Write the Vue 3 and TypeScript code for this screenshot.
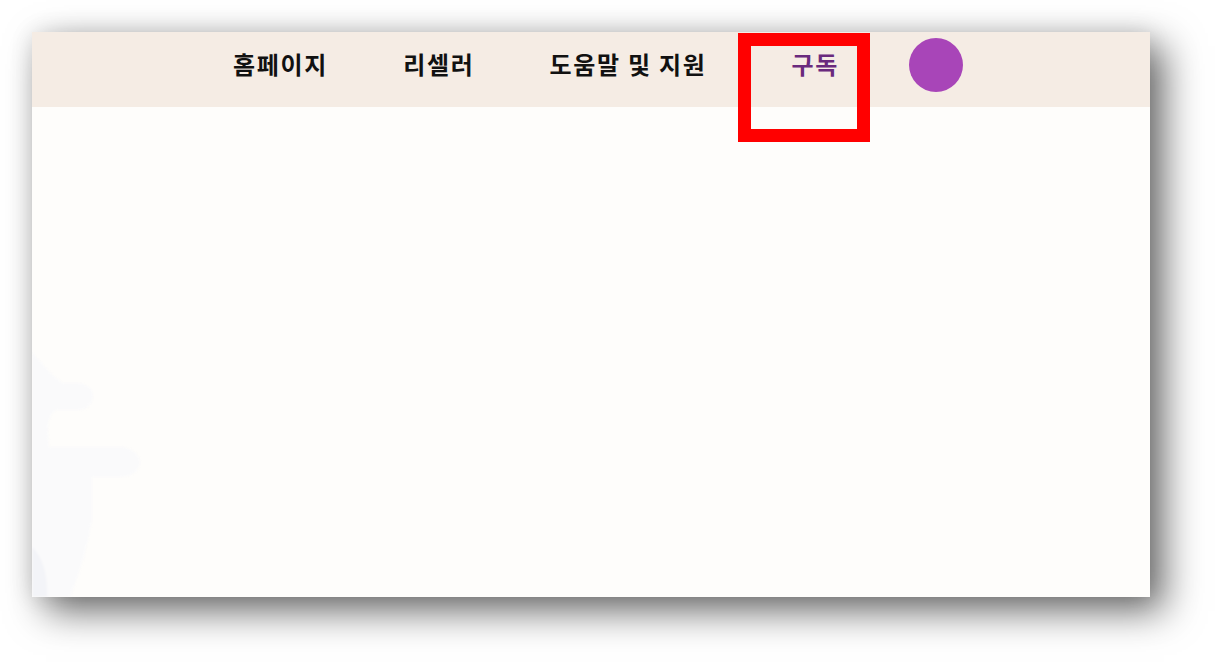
<template>
  <div class="screen">
    <div class="page">
      <header class="topbar">
        <nav class="menu">
          <a v-for="item in links" :key="item.label" :class="['menu-link', { active: item.active }]">{{ item.label }}</a>
          <span class="avatar"></span>
        </nav>
      </header>
      <main class="body-area">
        <svg class="blob" viewBox="0 0 110 245" width="110" height="245">
          <path d="M0 0 L16 18 L30 31 L48 31 Q62 34 61 46 Q58 58 48 58 L24 58 Q15 64 16 80 L17 95 L92 95 Q109 100 108 112 Q104 124 90 125 L60 125 L60 168 Q54 205 38 245 L0 245 Z" fill="#fafafb" />
          <path d="M0 195 Q16 210 15 245 L0 245 Z" fill="#f3f4f8" />
        </svg>
      </main>
      <div class="callout"></div>
    </div>
  </div>
</template>

<script setup lang="ts">
const links = [
  { label: '홈페이지', active: false },
  { label: '리셀러', active: false },
  { label: '도움말 및 지원', active: false },
  { label: '구독', active: true }
]
</script>

<style scoped>
.screen {
  width: 1215px;
  height: 662px;
  padding: 32px 0 0 32px;
  box-sizing: border-box;
  background: #fff;
  overflow: hidden;
}

.page {
  position: relative;
  width: 1118px;
  height: 565px;
  display: flex;
  flex-direction: column;
  background: #fefdfb;
  box-shadow: 14px 14px 36px rgba(0, 0, 0, 0.58), 0 0 22px rgba(0, 0, 0, 0.1);
}

.topbar {
  height: 75px;
  flex-shrink: 0;
  background: #f5ece4;
}

.menu {
  display: flex;
  align-items: center;
  gap: 75px;
  height: 66px;
  padding: 0 0 0 201px;
}

.menu-link {
  padding-bottom: 4px;
  font-family: "Noto Sans CJK KR", "Liberation Sans", sans-serif;
  font-size: 24px;
  font-weight: 700;
  letter-spacing: 1.7px;
  color: #111;
  white-space: nowrap;
}

.menu-link.active {
  margin-left: 10px;
  color: #6a2a7d;
}

.avatar {
  width: 54px;
  height: 54px;
  margin-left: -5px;
  border-radius: 50%;
  background: #a845b8;
}

.body-area {
  position: relative;
  flex: 1;
  overflow: hidden;
}

.blob {
  position: absolute;
  left: 0;
  bottom: 0;
  filter: blur(1px);
}

.callout {
  position: absolute;
  left: 706px;
  top: 1px;
  width: 132px;
  height: 109px;
  box-sizing: border-box;
  border: 13px solid #ff0000;
}
</style>

<style>
html, body { margin: 0; background: #fff; }
</style>
